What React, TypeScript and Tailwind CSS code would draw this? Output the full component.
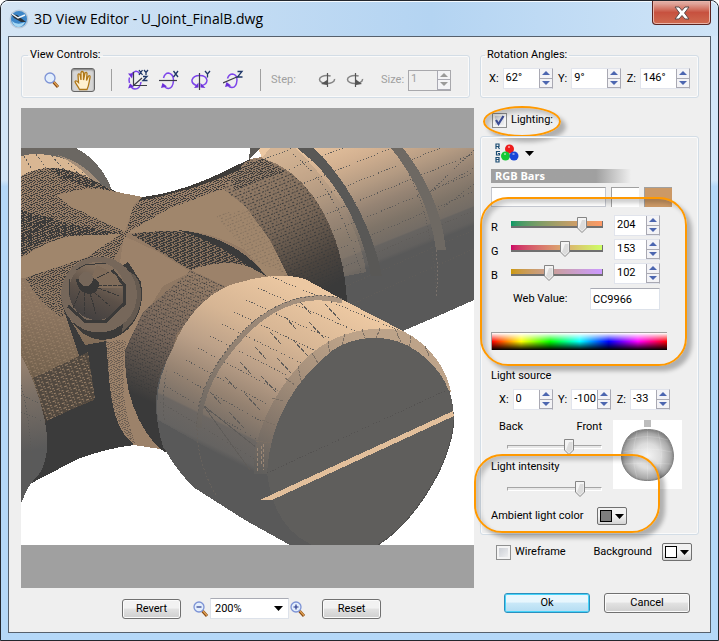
import { useState } from 'react'
import type { ReactNode } from 'react'

const beige = '#e2bf9b'

function Joint() {
  return (
    <svg
      viewBox="21 148 453 397"
      className="block w-full bg-white"
      shapeRendering="crispEdges"
      role="img"
      aria-label="U_Joint_FinalB"
    >
      <defs>
        <linearGradient id="body" gradientUnits="userSpaceOnUse" x1="100" y1="170" x2="70" y2="460">
          <stop offset="0" stopColor="#9a8069" />
          <stop offset="0.5" stopColor="#8c7560" />
          <stop offset="0.7" stopColor="#75634f" />
          <stop offset="0.85" stopColor="#4a4139" />
          <stop offset="1" stopColor="#3a3a3a" />
        </linearGradient>
        <linearGradient id="neck" gradientUnits="userSpaceOnUse" x1="255" y1="165" x2="325" y2="290">
          <stop offset="0" stopColor="#98806a" />
          <stop offset="0.45" stopColor="#7a6858" />
          <stop offset="0.8" stopColor="#4b443e" />
          <stop offset="1" stopColor="#3a3a3a" />
        </linearGradient>
        <linearGradient id="neck2" gradientUnits="userSpaceOnUse" x1="190" y1="275" x2="135" y2="395">
          <stop offset="0" stopColor="#937b66" />
          <stop offset="0.5" stopColor="#77665a" />
          <stop offset="1" stopColor="#3a3a3a" />
        </linearGradient>
        <linearGradient id="rear" gradientUnits="userSpaceOnUse" x1="305" y1="140" x2="358" y2="272">
          <stop offset="0" stopColor="#ecc8a2" />
          <stop offset="0.25" stopColor="#d3b191" />
          <stop offset="0.45" stopColor="#b39a82" />
          <stop offset="0.6" stopColor="#968474" />
          <stop offset="0.75" stopColor="#7f7468" />
          <stop offset="0.87" stopColor="#736c65" />
          <stop offset="0.88" stopColor="#676461" />
          <stop offset="0.97" stopColor="#62605e" />
          <stop offset="1" stopColor="#595959" />
        </linearGradient>
        <linearGradient id="front" gradientUnits="userSpaceOnUse" x1="285" y1="278" x2="203" y2="447">
          <stop offset="0" stopColor="#ecc8a2" />
          <stop offset="0.3" stopColor="#d6b594" />
          <stop offset="0.5" stopColor="#bba088" />
          <stop offset="0.7" stopColor="#958271" />
          <stop offset="0.84" stopColor="#7a7067" />
          <stop offset="0.85" stopColor="#6c6763" />
          <stop offset="0.97" stopColor="#656361" />
          <stop offset="1" stopColor="#595959" />
        </linearGradient>
        <linearGradient id="rim" gradientUnits="userSpaceOnUse" x1="340" y1="330" x2="262" y2="475">
          <stop offset="0" stopColor="#bda389" />
          <stop offset="0.4" stopColor="#a38e7a" />
          <stop offset="0.7" stopColor="#84766a" />
          <stop offset="1" stopColor="#5f5e5c" />
        </linearGradient>
        <linearGradient id="frontRing" gradientUnits="userSpaceOnUse" x1="320" y1="300" x2="200" y2="430">
          <stop offset="0" stopColor="#a99480" />
          <stop offset="0.6" stopColor="#8f7f70" />
          <stop offset="1" stopColor="#67635f" />
        </linearGradient>
        <linearGradient id="corner" gradientUnits="userSpaceOnUse" x1="25" y1="365" x2="38" y2="450">
          <stop offset="0" stopColor="#94806f" />
          <stop offset="0.4" stopColor="#786e65" />
          <stop offset="1" stopColor="#5a5a5a" />
        </linearGradient>
        <linearGradient id="cone" gradientUnits="userSpaceOnUse" x1="105" y1="270" x2="85" y2="318">
          <stop offset="0" stopColor="#85715f" />
          <stop offset="0.5" stopColor="#5b5048" />
          <stop offset="1" stopColor="#434040" />
        </linearGradient>
        <pattern id="mesh" width="11" height="9" patternUnits="userSpaceOnUse">
          <path
            d="M0 0.5h2M4 0.5h1M7 0.5h3M2 1.5h1M5 1.5h2M10 1.5h1M1 2.5h1M4 2.5h1M8 2.5h2M0 3.5h1M6 3.5h2M2 4.5h3M9 4.5h1M0 5.5h2M6 5.5h1M3 6.5h2M8 6.5h3M1 7.5h1M5 7.5h2M9 7.5h1M3 8.5h1M7 8.5h1"
            stroke="#3c3b3a"
          />
        </pattern>
        <pattern id="meshDark" width="7" height="5" patternUnits="userSpaceOnUse">
          <path d="M0 0.5h4M5 1.5h2M0 1.5h2M2 2.5h4M0 3.5h3M5 3.5h1M2 4.5h2M6 4.5h1" stroke="#3a3a3a" />
        </pattern>
        <pattern id="ribs" width="9" height="6" patternUnits="userSpaceOnUse" patternTransform="rotate(-22)">
          <path d="M0 0.5h2M3 0.5h1M5 0.5h2M2 3.5h1M6 3.5h2" stroke="#3a3a3a" />
        </pattern>
        <pattern id="ribsDown" width="8" height="5" patternUnits="userSpaceOnUse" patternTransform="rotate(25)">
          <path d="M0 0.5h2M3 0.5h1M6 0.5h1M2 3.5h1M5 2.5h1" stroke="#3a3a3a" />
        </pattern>
        <pattern id="sand" width="8" height="5" patternUnits="userSpaceOnUse" patternTransform="rotate(-20)">
          <path d="M0 0.5h3M5 0.5h1M2 2.5h1M4 3.5h2" stroke="#a0866c" />
        </pattern>
        <clipPath id="rearClip">
          <path d="M258 148H474V300L403 331L347 302C346 250 320 175 262 158Z" />
        </clipPath>
        <clipPath id="frontClip">
          <path d="M172 350C190 310 215 285 255 279C275 275 290 275 305 279L403 331L378 328C330 332 290 365 272 400C258 425 252 450 254 475C240 470 180 450 157 410Z" />
        </clipPath>
      </defs>

      {/* rear left cap */}
      <path d="M21 148H76C93 157 107 174 112 191L90 185L21 168Z" fill="#6b6762" />
      <path d="M21 156C40 151 62 156 78 165C90 172 98 182 104 190L60 186L21 184Z" fill="#d9b793" />
      <path d="M57 155C78 160 96 175 105 190L95 186C88 174 75 163 57 155Z" fill="#a38e7a" />
      <path d="M24 156l8 14M36 154l10 14M52 156l14 16M68 163l14 14M82 172l10 12" stroke="#5c5a57" strokeDasharray="2 2" />

      {/* body */}
      <path
        d="M21 176C35 168 50 166 68 170C90 175 105 189 118 192Q130 196 143 197C190 191 222 172 250 159L262 157L300 180L347 302L250 400L165 452L159 448L134 445C115 447 95 453 80 458L37 480L21 490Z"
        fill="url(#body)"
      />
      <path
        d="M21 176C35 168 50 166 68 170C90 175 105 189 118 192L127 234L80 262L60 290L21 260Z"
        fill="url(#mesh)"
      />
      <path d="M21 210L75 225L124 234L60 236Q35 244 21 256Z" fill="url(#meshDark)" />
      <path d="M50 168C75 168 95 183 115 191L85 186L60 178Z" fill="url(#meshDark)" />
      <path d="M143 197C190 191 222 172 250 159V185L127 233L131 210Z" fill="url(#mesh)" />
      <path d="M143 197C190 191 222 172 250 159V164Q210 187 138 201Z" fill="#3e3b38" />
      <path d="M25 279L127 234L112 262L61 318L40 300Z" fill="url(#mesh)" />

      {/* smooth saddles */}
      <path d="M57 196Q75 188 100 189L143 197L134 204L125 232L104 222L70 206Z" fill="#a0866c" />
      <path d="M127 233L170 208L223 189L250 206L288 274L270 280L245 250Q205 228 170 231Z" fill="#a0866c" />
      <path d="M215 215L250 208L288 274L255 262Z" fill="url(#ribs)" opacity=".25" />
      <path d="M21 258Q45 242 70 236L121 234L87 257L25 278H21Z" fill="#a0866c" />
      <path d="M124 236L158 252L191 272L163 286L143 318L128 346L117 366L106 341L140 300L120 262Z" fill="#9c826a" />
      <path d="M131 234Q185 226 215 240Q238 252 252 266V280L190 270Z" fill="#87705c" />
      <path d="M131 234Q185 226 215 240Q238 252 252 266V280L190 270Z" fill="url(#meshDark)" />
      <path d="M178 230Q235 236 266 276L250 268Q222 244 178 230Z" fill="#3a3a3a" />
      <path d="M190 270Q225 258 250 267L268 277L245 284L216 294Z" fill="#9c826a" />

      {/* lower neck and shadow */}
      <path d="M21 280L55 290L82 350L96 385L40 420L21 357Z" fill="url(#sand)" opacity=".75" />
      <path d="M62 305L85 345L107 341L125 350L134 445C115 447 95 453 80 458L37 480L46 420L94 400Z" fill="#3b3b3b" />
      <path d="M33 378L88 352L95 398L47 421Z" fill="#51483f" />
      <path d="M33 378L88 352L95 398L47 421Z" fill="url(#sand)" />
      <path d="M191 270L227 287L177 333L157 410L165 452L150 440L125 395L125 350L143 312Z" fill="url(#neck2)" />
      <path d="M191 270L227 287L177 333L157 395L125 385L125 350L143 312Z" fill="url(#ribsDown)" />
      <path d="M106 341L126 340C120 390 140 430 160 449L134 445C108 425 110 380 106 341Z" fill="#9c826a" />
      <path d="M106 341L126 340C120 390 125 415 136 445C108 425 110 380 106 341Z" fill="url(#mesh)" opacity=".5" />

      {/* rear right cylinder */}
      <path d="M258 148H474V300L438 316L403 331L340 302C346 250 320 175 262 158Z" fill="url(#rear)" />
      <path d="M250 148H260L249 160Z" fill="#5c5a57" />
      <path d="M262 158L270 148H295C335 185 360 230 366 272L342 277C334 225 310 175 262 158Z" fill="#a08b78" opacity=".3" />
      <g clipPath="url(#rearClip)" fill="none" stroke="#5f5c59" strokeDasharray="1 2">
        {[0, 1, 2, 3, 4, 5, 6, 7, 8, 9].map((i) => (
          <path key={i} d={`M${262 + i * 10} ${160 + i * 16}L480 ${75 + i * 19}`} />
        ))}
        <path d="M293 154Q340 190 362 276M391 148Q430 190 437 296" />
        <path d="M430 192L474 150M430 192L474 168M437 212L474 184" />
      </g>
      <path d="M297 148H314C345 178 372 225 382 276H371C362 230 340 180 297 148Z" fill="#595856" />
      <path d="M391 148H403C425 176 442 210 446 250H436C432 215 415 177 391 148Z" fill="#6e6963" />
      <path d="M436 250Q439 275 436 296" stroke="#78706a" strokeDasharray="2 2" fill="none" />

      {/* rear right neck */}
      <path d="M245 162L262 158C320 175 346 250 347 305L288 276L270 240L245 206L223 189Z" fill="url(#neck)" />
      <path d="M245 162L262 158C320 175 346 250 347 305L288 276L270 240L245 206L223 189Z" fill="url(#ribs)" />
      <path d="M226 172L262 158L285 172L260 180L235 190Z" fill="url(#mesh)" />

      {/* knob */}
      <path d="M63 303Q75 338 102 340C130 340 147 310 141 282L128 262Z" fill="#3b3a39" />
      <path d="M130 272Q142 278 141 298Q139 320 122 332Z" fill="#655a50" />
      <ellipse cx="99" cy="294.5" rx="38" ry="38" fill="#76675a" />
      <ellipse cx="97" cy="291" rx="28" ry="29" fill="url(#cone)" />
      <path d="M68 306L85 321H106L124 304V285L112 270" fill="none" stroke="#3b3a39" strokeWidth="3" />
      <path d="M76 270L85 265L106 263M69 279V295" fill="none" stroke="#3b3a39" />
      <path d="M97 265L116 275L122 288H98L92 276Z" fill="#806c5a" />
      <path d="M97 278L113 270M98 285H122M98 288L119 296M94 292L110 306M90 293L96 314M84 292V314M80 291L73 308" stroke="#393837" strokeDasharray="4 1" />
      <path d="M76 279Q77 292 89 294Q99 294 99 282L91 276Z" fill="#393837" />
      <circle cx="86" cy="279" r="7" fill="#76675a" />

      {/* near left cylinder */}
      <path d="M21 355C35 380 50 425 47 450Q44 472 35 478L28 488L21 503Z" fill="url(#corner)" />
      <path d="M21 385Q33 430 31 482M21 395l18 8M21 412l22 9" stroke="#5c5a57" strokeDasharray="1 2" fill="none" />

      {/* front cylinder */}
      <path
        d="M172 350C185 315 212 286 245 281C265 275 290 274 305 279L347 302L403 331C430 347 452 375 454 418C450 470 410 525 378 545H290L245 520L193 487C172 465 165 448 163 447C155 420 153 395 162 370Z"
        fill="#595959"
      />
      <path
        d="M172 350C185 315 212 286 245 281C265 275 290 274 305 279L347 302L403 331L378 340L300 380L267 473L254 473L245 469L158 420C155 395 160 372 172 350Z"
        fill="url(#front)"
      />
      <g clipPath="url(#frontClip)" stroke="#5f5c59">
        {[0, 1, 2, 3, 4, 5, 6, 7, 8, 9, 10].map((i) => (
          <path key={i} d={`M${270 - i * 12} ${276 + i * 12}l170 ${72 + i * 3}`} strokeDasharray="1 2" />
        ))}
        {[0, 1, 2, 3, 4, 5, 6].map((i) => (
          <path
            key={i}
            d={`M${300 - i * 15} ${302 + i * 15}l12 13M${325 - i * 16} ${304 + i * 18}l16 17`}
            strokeDasharray="4 2"
          />
        ))}
        <path d="M203 405L250 470M203 405L262 452" />
        <path d="M168 362Q160 400 166 430" fill="none" strokeDasharray="2 2" />
      </g>
      <path
        d="M342 301C310 292 275 302 245 333C220 359 199 390 199 428"
        fill="none"
        stroke="url(#frontRing)"
        strokeWidth="5"
      />
      <path d="M342 299C310 289 270 303 243 331C215 361 195 395 197 430Q198 465 217 497" fill="none" stroke="#66615c" strokeDasharray="2 2" />
      <path
        d="M254 474C250 440 275 385 312 353C340 330 375 325 403 331C430 344 447 370 451 392L440 385L378 350L290 410L267 474Z"
        fill="url(#rim)"
      />
      <path d="M285 378l10 7M298 366l4 19M312 353l6 10M328 341l2 13M345 334l-3 12M362 329l4 12M380 328l-4 11M395 329l6 13M411 336l-2 14M425 346l4 10M272 398l11 3M262 420l13 5M256 441l14 2" stroke="#7b6f64" strokeDasharray="3 1" />
      <path
        d="M267 473C270 420 295 380 333 350C355 335 392 332 418 352C440 368 454 390 454 420C450 470 410 525 378 545H312C285 532 272 510 267 473Z"
        fill="#5f5e5c"
      />
      <path d="M454 420C450 470 410 525 378 545" fill="none" stroke="#4f4e4d" />
      <path d="M267 473L447 390" stroke="#545251" strokeDasharray="1 2" />
      <path d="M260 500L453 411L454 416L272 500Z" fill={beige} />
      <path d="M257 448l1 24M261 446v20M264 444l-1 26" stroke="#9a8674" strokeDasharray="3 2" />
    </svg>
  )
}

interface SpinnerProps {
  label: string
  value: string
  width: string
  hideLabel?: boolean
  disabled?: boolean
}

function Spinner({ label, value, width, hideLabel, disabled }: SpinnerProps) {
  return (
    <label className={`flex items-center gap-1 whitespace-nowrap ${disabled ? 'text-[#a0a0a0]' : ''}`}>
      {!hideLabel && <span>{label}</span>}
      <span
        className={`flex h-[21px] border ${width} ${
          disabled ? 'border-[#a8a8ac] bg-[#efefef]' : 'border-[#e1e4ec] border-r-[#a9a9b3] bg-white'
        }`}
      >
        <input
          defaultValue={value}
          disabled={disabled}
          aria-label={hideLabel ? label : undefined}
          className="w-0 flex-1 bg-transparent pl-[2px] pb-[2px] outline-none"
        />
        <span className="flex w-[13px] flex-col border-l border-[#a9a9b3]">
          <Arrow up disabled={disabled} />
          <Arrow disabled={disabled} />
        </span>
      </span>
    </label>
  )
}

function Arrow({ up, disabled }: { up?: boolean; disabled?: boolean }) {
  return (
    <button
      type="button"
      disabled={disabled}
      aria-label={up ? 'Increase' : 'Decrease'}
      className="flex flex-1 items-center justify-center border-b border-[#a9a9b3] bg-[#f3f3f6]"
    >
      <svg width="8" height="4" viewBox="0 0 8 4">
        <path d={up ? 'M0 4L4 0L8 4Z' : 'M0 0L4 4L8 0Z'} fill={disabled ? '#9a9a9a' : '#4c66b0'} />
      </svg>
    </button>
  )
}

interface SliderProps {
  label: string
  start: number
  max: number
  track: string
}

function Slider({ label, start, max, track }: SliderProps) {
  const [value, setValue] = useState(start)
  return (
    <span className="relative flex h-4 w-full items-center">
      <input
        type="range"
        aria-label={label}
        min={0}
        max={max}
        value={value}
        onChange={(e) => setValue(Number(e.target.value))}
        className={`w-full appearance-none [&::-webkit-slider-thumb]:h-4 [&::-webkit-slider-thumb]:w-[10px] [&::-webkit-slider-thumb]:appearance-none [&::-webkit-slider-thumb]:opacity-0 ${track}`}
      />
      <span className="pointer-events-none absolute inset-y-0 left-0 right-[10px]">
        <svg width="10" height="16" viewBox="0 0 10 16" className="absolute top-0" style={{ left: `${(value / max) * 100}%` }}>
          <path d="M0.5 0.5H9.5V11L5 15.5L0.5 11Z" fill="#f4f4f4" stroke="#858585" />
          <path d="M5 3H8.5V10.5L5 14L2 11Z" fill="#dcdcdc" />
        </svg>
      </span>
    </span>
  )
}

function Checkbox({ children, checked }: { children: ReactNode; checked?: boolean }) {
  return (
    <label className="flex items-center gap-1">
      <span className="relative flex h-[15px] w-[15px]">
        <input
          type="checkbox"
          defaultChecked={checked}
          className="peer h-full w-full appearance-none border border-[#8e8f8f] bg-linear-to-br from-[#c4c8cf] to-[#f6f6f6] shadow-[inset_0_0_0_2px_#f4f4f4]"
        />
        <svg viewBox="0 0 15 15" className="pointer-events-none absolute inset-0 hidden peer-checked:block">
          <path d="M4 7L6.500 11L11.500 3" fill="none" stroke="#3b4c94" strokeWidth="2.200" />
        </svg>
      </span>
      {children}
    </label>
  )
}

function Caret() {
  return (
    <svg width="9" height="5" viewBox="0 0 9 5">
      <path d="M0 0H9L4.500 5Z" />
    </svg>
  )
}

function ColorButton({ label, fill }: { label: string; fill: string }) {
  return (
    <button
      type="button"
      aria-label={label}
      className="flex h-[18px] w-[30px] items-center justify-center gap-[3px] rounded-xs border border-[#707070] bg-linear-to-b from-[#f2f2f2] from-50% to-[#d4d4d4]"
    >
      <span className={`h-3 w-3 border border-black ${fill}`} />
      <Caret />
    </button>
  )
}

function PushButton({ children, width, primary }: { children: ReactNode; width: string; primary?: boolean }) {
  return (
    <button
      type="button"
      className={`flex h-5 items-center justify-center rounded-[3px] border shadow-[inset_0_0_0_1px_#fbfbfb] ${width} ${
        primary
          ? 'border-[#2c8fbd] bg-linear-to-b from-[#e8f6fd] from-45% via-[#c9e8f8] via-50% to-[#b4dcf2] ring-1 ring-inset ring-[#46d3f9]'
          : 'border-[#707070] bg-linear-to-b from-[#f2f2f2] from-45% via-[#e2e2e2] via-50% to-[#cfcfcf]'
      }`}
    >
      {children}
    </button>
  )
}

function Magnifier({ sign }: { sign?: string }) {
  return (
    <svg width="16" height="16" viewBox="0 0 16 16">
      <path d="M9.500 10L14 15" stroke="#8a4b10" strokeWidth="3" />
      <path d="M10 10L14 14.500" stroke="#e3a458" strokeWidth="1.200" />
      <circle cx="6" cy="6" r="5" fill="#e3eefc" stroke="#7d93d6" strokeWidth="1.300" />
      {sign && <path d={sign} stroke="#26368a" strokeWidth="1.200" />}
    </svg>
  )
}

function RotateIcon({ axis }: { axis: 'XYZ' | 'X' | 'Y' | 'Z' }) {
  return (
    <svg width="22" height="22" viewBox="0 0 22 22" fill="none">
      <g stroke="#7d45ea" strokeWidth="1.500">
        {axis === 'XYZ' && <path d="M4 6Q9 -1 13 5M14 13Q13 20 8 20Q5 20 4 17M2.500 8.500Q1.500 11 2.500 14" />}
        {axis === 'X' && <path d="M4.500 9Q6 4 9.500 4Q14.500 5 14.500 11.500Q14 19 9.500 19.500Q6.500 19.500 5 16.500" />}
        {axis === 'Y' && <path d="M5.500 16.500Q0.500 14.500 1 11Q2.500 6.500 8.500 6.500Q15.500 6.500 16 11.500Q15.500 15.500 11 16.500" />}
        {axis === 'Z' && <path d="M4.500 9.500Q6 5 9.500 5Q14 5.500 14 11Q13.500 18.500 9 18.500Q6 18.500 5 15.500" />}
      </g>
      <g stroke="#3c3c48" strokeWidth="1.200">
        {axis === 'XYZ' && <path d="M6.500 3V16.500H20M6.500 16.500L15 9" />}
        {axis === 'X' && <path d="M0 11.500H18" />}
        {axis === 'Y' && <path d="M8.500 4V21" />}
        {axis === 'Z' && <path d="M0 14L15 7.500" />}
      </g>
      <g fill="#6b2fd8">
        {axis === 'XYZ' && <path d="M1 4.500L6 4.500L5 9.500ZM1 19.500L3 14.500L7 17.500Z" />}
        {axis === 'X' && <path d="M2 19L3.500 14L8 17.500Z" />}
        {axis === 'Y' && <path d="M3 19L7.500 13.500V18.500ZM14.500 19L9.500 18.500V14Z" />}
        {axis === 'Z' && <path d="M2 18L3.500 13L8 16.500Z" />}
      </g>
      <g stroke="#1f3768" strokeWidth="1.300">
        {axis === 'XYZ' && <path d="M12 1L15.500 6M15.500 1L12 6M17 1L19 3.500L21 1M19 3.500V6M16 7.500H20L16 11.500H20.500" />}
        {axis === 'X' && <path d="M14.500 2L19 8M19 2L14.500 8" />}
        {axis === 'Y' && <path d="M14 2L16.500 5L19 2M16.500 5V8.500" />}
        {axis === 'Z' && <path d="M14.500 2.500H19L14.500 8H19.500" />}
      </g>
    </svg>
  )
}

function StepIcon({ back }: { back?: boolean }) {
  return (
    <svg width="18" height="16" viewBox="0 0 18 16" fill="none">
      <ellipse cx="9" cy="7.500" rx="7.500" ry="4" stroke="#858585" strokeWidth="1.500" strokeDasharray="31 5" />
      <path d="M9.500 1V15" stroke="#555" strokeWidth="1.200" />
      <path d={back ? 'M3 12L9 8V13Z' : 'M16 12L10 7.500V13Z'} fill="#555" />
    </svg>
  )
}

function ToolButton({ label, children, active }: { label: string; children: ReactNode; active?: boolean }) {
  return (
    <button
      type="button"
      aria-label={label}
      className={`flex h-6 w-6 items-center justify-center rounded-[3px] ${
        active ? 'border border-[#666] bg-[#d6d6d6] shadow-[inset_0_1px_2px_#777]' : ''
      }`}
    >
      {children}
    </button>
  )
}

function HandIcon() {
  return (
    <svg width="18" height="21" viewBox="0 0 18 21">
      <path
        d="M5.500 19.500C4 16 1 13 1 11.500Q2 10 4.500 12.500L4 5Q4.500 3 6 4.500L7 10V2.500Q8 0.500 9.500 2.500V10L11 3Q12.500 1.500 13 3.500L12.500 10.500L14.500 6Q16.500 5 16 7.500C15 12 15 16 13 19.500Z"
        fill="#fff0cf"
        stroke="#b07818"
        strokeWidth="1.300"
      />
    </svg>
  )
}

const channels = [
  { name: 'R', value: 204, track: 'from-[#009966] to-[#ff9966]' },
  { name: 'G', value: 153, track: 'from-[#cc0066] to-[#ccff66]' },
  { name: 'B', value: 102, track: 'from-[#cc9900] to-[#cc99ff]' },
]

const outline = 'pointer-events-none absolute border-2 border-[#f90] shadow-[5px_5px_4px_#0004,inset_4px_4px_4px_#0003]'
const groove = 'h-1 border border-[#fff] border-t-[#a5a5a5] border-l-[#a5a5a5] bg-[#e8e8e8]'
const group = 'rounded-[3px] border border-[#d3dde6] shadow-[inset_0_0_0_1px_#fafafa]'

export default function App() {
  return (
    <div className="flex min-h-screen flex-col rounded-t-lg border border-[#23272e] bg-[#b9d7f4] bg-linear-to-b from-[#d3e6f7] from-28% to-[#b5d8f8] to-29% px-[7px] pb-[7px] font-['Roboto','Noto_Sans',sans-serif] text-[11px] leading-4 text-black">
      <header className="-mx-[7px] flex h-[35px] items-start justify-between rounded-t-lg bg-linear-to-r from-[#d5e5f4] via-[#b4d4f2] via-60% to-[#cfe4f7] pl-2 shadow-[inset_0_1px_0_#f4faff]">
        <h1 className="flex h-9 items-center gap-[5px] font-['Open_Sans','Noto_Sans',sans-serif] text-[14px]">
          <svg width="20" height="20" viewBox="0 0 20 20">
            <circle cx="10" cy="10" r="9.500" fill="#b9c9d9" />
            <circle cx="10" cy="10" r="8" fill="#3c86c8" />
            <path d="M3 12Q8 17 16 13Q14 18 9 18Q4 17 3 12Z" fill="#a6d8f4" />
            <path d="M2 5L8 6L17 13L12 13L5 9Z" fill="#29333d" />
            <path d="M3 5L9 9L16 6" stroke="#eef5fa" strokeWidth="1.500" fill="none" />
          </svg>
          3D View Editor - U_Joint_FinalB.dwg
        </h1>
        <button
          type="button"
          aria-label="Close"
          className="mr-[7px] flex h-6 w-[59px] items-center justify-center rounded-b-[4px] border border-t-0 border-[#5b2420] bg-linear-to-b from-[#e0a79d] from-10% via-[#c7513f] via-50% to-[#cf6a50] shadow-[inset_0_0_0_1px_#e9b5aa]"
        >
          <svg width="16" height="14" viewBox="0 0 16 14">
            <path d="M1 1H5L8 4.500L11 1H15L10.500 7L15 13H11L8 9.500L5 13H1L5.500 7Z" fill="#fff" stroke="#5a4a4a" />
          </svg>
        </button>
      </header>

      <main className="flex flex-1 gap-[6px] border border-[#56606c] bg-[#efefef] pt-[10px] pr-[11px] pb-[13px] pl-3">
        <section className="flex min-w-0 flex-1 flex-col">
          <fieldset className={`mr-[6px] flex h-[51px] items-start px-[18px] ${group}`}>
            <legend className="-ml-3 px-[2px]">View Controls:</legend>
            <div className="flex w-full items-center pt-[5px]">
              <div className="flex gap-[7px]">
                <ToolButton label="Zoom">
                  <Magnifier />
                </ToolButton>
                <ToolButton label="Pan" active>
                  <HandIcon />
                </ToolButton>
              </div>
              <span className="mr-[14px] ml-4 h-[22px] w-px bg-[#a0a0a0]" />
              <div className="flex gap-2">
                <ToolButton label="Rotate free">
                  <RotateIcon axis="XYZ" />
                </ToolButton>
                <ToolButton label="Rotate X">
                  <RotateIcon axis="X" />
                </ToolButton>
                <ToolButton label="Rotate Y">
                  <RotateIcon axis="Y" />
                </ToolButton>
                <ToolButton label="Rotate Z">
                  <RotateIcon axis="Z" />
                </ToolButton>
              </div>
              <span className="mr-[10px] ml-[14px] h-[22px] w-px bg-[#a0a0a0]" />
              <span className="w-11 text-[#a0a0a0]">Step:</span>
              <div className="mr-[14px] flex gap-1">
                <ToolButton label="Step back">
                  <StepIcon back />
                </ToolButton>
                <ToolButton label="Step forward">
                  <StepIcon />
                </ToolButton>
              </div>
              <Spinner label="Size:" value="1" width="w-[43px]" disabled />
            </div>
          </fieldset>

          <div className="mt-[10px] flex flex-1 flex-col justify-center bg-[#a0a0a0] pt-10 pb-[43px]">
            <Joint />
          </div>

          <div className="mt-[10px] flex h-[21px] items-center justify-center pl-[8px]">
            <PushButton width="w-[59px]">Revert</PushButton>
            <button type="button" aria-label="Zoom out" className="ml-3">
              <Magnifier sign="M3.500 6H8.500" />
            </button>
            <span className="relative mx-[1px] flex h-[21px] w-[79px] items-center border border-[#dde2ea] border-t-[#a9abb4] bg-white">
              <select aria-label="Zoom level" defaultValue="200%" className="w-full appearance-none bg-transparent pl-1 outline-none">
                <option>100%</option>
                <option>200%</option>
                <option>400%</option>
              </select>
              <span className="pointer-events-none absolute right-[5px]">
                <Caret />
              </span>
            </span>
            <button type="button" aria-label="Zoom in" className="mr-4">
              <Magnifier sign="M3.500 6H8.500M6 3.500V8.500" />
            </button>
            <PushButton width="w-[59px]">Reset</PushButton>
          </div>
        </section>

        <section className="flex w-[219px] shrink-0 flex-col">
          <fieldset className={`h-[51px] px-2 ${group}`}>
            <legend className="-ml-1 px-[2px]">Rotation Angles:</legend>
            <div className="flex justify-between pt-[5px]">
              <Spinner label="X:" value="62°" width="w-[50px]" />
              <Spinner label="Y:" value="9°" width="w-[50px]" />
              <Spinner label="Z:" value="146°" width="w-[50px]" />
            </div>
          </fieldset>

          <div className="relative mt-[14px] flex h-4 self-start pl-3">
            <Checkbox checked>Lighting:</Checkbox>
            <span className={`-top-[6px] left-[3px] h-[31px] w-[78px] rounded-[50%] ${outline}`} />
          </div>

          <div className={`relative mt-2 flex h-[399px] flex-col pt-[6px] pr-4 pl-[10px] ${group}`}>
            <button type="button" aria-label="Color model" className="flex items-center gap-[6px] self-start pl-1">
              <svg width="24" height="20" viewBox="0 0 24 20">
                <g fill="none" stroke="#1c4d73" strokeWidth="1.200">
                  <path d="M1 6V1H4V3.500H1M3 3.500L4.500 6M5 8.500H1.500V12H4.500V10.500H3M1 14.500H4V19H1ZM1 16.500H4" />
                </g>
                <circle cx="14.500" cy="6" r="4.500" fill="#ee1c1c" />
                <circle cx="10.500" cy="13" r="4.500" fill="#16c832" />
                <circle cx="19" cy="13" r="4.500" fill="#1746d8" />
                <path d="M13 4h2M9 11h2M17.500 11h2" stroke="#fff9" strokeWidth="1.500" />
              </svg>
              <Caret />
            </button>
            <h2 className="mt-[6px] h-[14px] w-[140px] bg-linear-to-r from-[#a0a0a0] from-75% to-[#efefef] pl-1 font-['Open_Sans','Noto_Sans',sans-serif] text-[11px] leading-[14px] font-bold text-white">
              RGB Bars
            </h2>
            <div className="mt-1 flex h-5 gap-[5px]">
              <span className="w-[115px] border border-[#c5c8d0] border-t-[#a0a0a0] bg-white" />
              <span className="w-7 border-t border-l border-[#a0a0a0] bg-white" />
              <span className="w-7 border-t border-l border-[#a0a0a0] bg-[#cc9966]" />
            </div>

            <div className="mt-2 flex flex-col gap-[3px]">
              {channels.map(({ name, value, track }) => (
                <div key={name} className="flex h-[21px] items-center">
                  <span className="w-5 pt-[5px]">{name}</span>
                  <span className="mr-[11px] flex w-[92px] pb-[2px]">
                    <Slider
                      label={name}
                      start={value}
                      max={255}
                      track={`h-[7px] border-r border-b-2 border-[#707070] bg-linear-to-r ${track}`}
                    />
                  </span>
                  <Spinner label={`${name} value`} hideLabel value={String(value)} width="w-[46px]" />
                </div>
              ))}
            </div>

            <label className="mt-1 flex items-center justify-between pr-[22px] pl-[22px]">
              Web Value:
              <input
                defaultValue="CC9966"
                className="h-[22px] w-[70px] border border-[#dde2ea] border-t-[#a9abb4] bg-white pl-[2px] outline-none"
              />
            </label>

            <div className="mt-[22px] h-[18px] w-44 border-t border-l border-[#a0a0a0] bg-[linear-gradient(to_bottom,#fff,transparent_50%,#000),linear-gradient(to_right,red,yellow,lime,cyan,blue,magenta,red)]" />

            <span className="mt-[18px]">Light source</span>
            <div className="mt-[5px] flex justify-between pr-3 pl-2">
              <Spinner label="X:" value="0" width="w-[40px]" />
              <Spinner label="Y:" value="-100" width="w-[40px]" />
              <Spinner label="Z:" value="-33" width="w-[40px]" />
            </div>

            <div className="-mr-4 flex">
              <div className="mt-[9px] w-[111px]">
                <div className="flex justify-between pl-2">
                  <span>Back</span>
                  <span>Front</span>
                </div>
                <div className="mt-1 pl-4">
                  <Slider label="Back to front" start={67} max={100} track={groove} />
                </div>
                <div className="mt-1">Light intensity</div>
                <div className="mt-[6px] pl-4">
                  <Slider label="Light intensity" start={80} max={100} track={groove} />
                </div>
              </div>
              <svg viewBox="0 0 69 69" className="mt-[10px] ml-[11px] h-[69px] w-[69px] bg-white">
                <defs>
                  <radialGradient id="ball" cx=".5" cy=".52" r=".55">
                    <stop offset="0" stopColor="#f4f4f4" />
                    <stop offset=".45" stopColor="#dcdcdc" />
                    <stop offset=".8" stopColor="#a9a9a9" />
                    <stop offset="1" stopColor="#6f6f6f" />
                  </radialGradient>
                </defs>
                <rect x="31" width="7" height="7" fill="#bdbdbd" />
                <path
                  d="M34.500 9.500C45 9.500 52 13 56 20C61 29 62 39 58 47C53 57 45 60.500 34.500 60.500C24 60.500 16 57 11 47C7 39 8 29 13 20C17 13 24 9.500 34.500 9.500Z"
                  fill="url(#ball)"
                  stroke="#808080"
                />
                <path
                  d="M14 20Q34 13 55 20M10 32Q34 26 59 32M10 44Q34 42 59 44M24 12Q17 35 24 58M34.500 11V59M45 12Q52 35 45 58"
                  fill="none"
                  stroke="#fff"
                  strokeOpacity=".15"
                />
              </svg>
            </div>

            <div className="mt-[10px] flex items-center justify-between pr-[55px]">
              <span>Ambient light color</span>
              <ColorButton label="Ambient light color" fill="bg-[#7d7d7d]" />
            </div>

            <span className={`top-[60px] -left-px h-[169px] w-[207px] rounded-[28px] ${outline}`} />
            <span className={`top-[317px] -left-[7px] h-[79px] w-[186px] rounded-[28px] ${outline}`} />
          </div>

          <div className="mt-2 flex items-center justify-between pr-[7px] pl-4">
            <Checkbox>Wireframe</Checkbox>
            <span className="flex items-center gap-[10px]">
              Background
              <ColorButton label="Background" fill="bg-white" />
            </span>
          </div>

          <div className="mt-8 flex justify-end gap-[14px] pr-[9px]">
            <PushButton width="w-[86px]" primary>
              Ok
            </PushButton>
            <PushButton width="w-[86px]">Cancel</PushButton>
          </div>
        </section>
      </main>
    </div>
  )
}
